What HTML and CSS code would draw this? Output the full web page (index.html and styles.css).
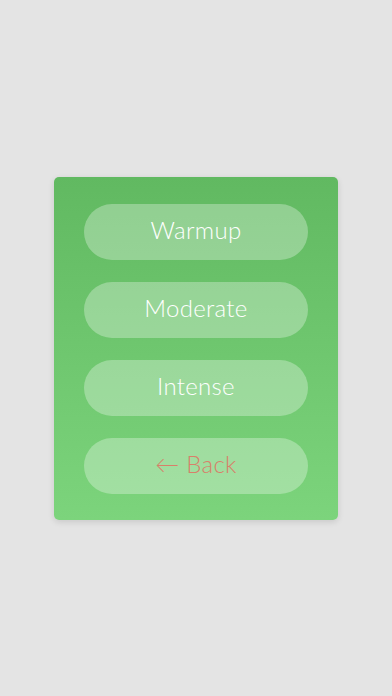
FILE: index.html
```html
<!DOCTYPE html>
<html>
<head>
<meta charset="utf-8">
<link rel="stylesheet" href="styles.css">
</head>
<body>
<div class="screen">
  <div class="card">
    <div class="btn">Warmup</div>
    <div class="btn">Moderate</div>
    <div class="btn">Intense</div>
    <div class="btn back">← Back</div>
  </div>
</div>
</body>
</html>
```
FILE: styles.css
```css
html, body {
  margin: 0;
  padding: 0;
  background: #e4e4e4;
}
.screen {
  width: 392px;
  height: 696px;
  display: flex;
  align-items: center;
  justify-content: center;
}
.card {
  width: 284px;
  box-sizing: border-box;
  padding: 27px 30px 26px 30px;
  border-radius: 5px;
  background: linear-gradient(180deg, #61b961 0%, #7cd47c 100%);
  box-shadow: 0 2px 6px rgba(0, 0, 0, 0.12);
  display: flex;
  flex-direction: column;
  gap: 22px;
  margin-top: 1px;
}
.btn {
  height: 56px;
  box-sizing: border-box;
  padding-bottom: 5px;
  border-radius: 28px;
  background: rgba(255, 255, 255, 0.3);
  color: #ffffff;
  font-family: Lato, "Open Sans", sans-serif;
  font-weight: 300;
  font-size: 24px;
  display: flex;
  align-items: center;
  justify-content: center;
  letter-spacing: 0.3px;
}
.back {
  color: #d8806a;
}
```
